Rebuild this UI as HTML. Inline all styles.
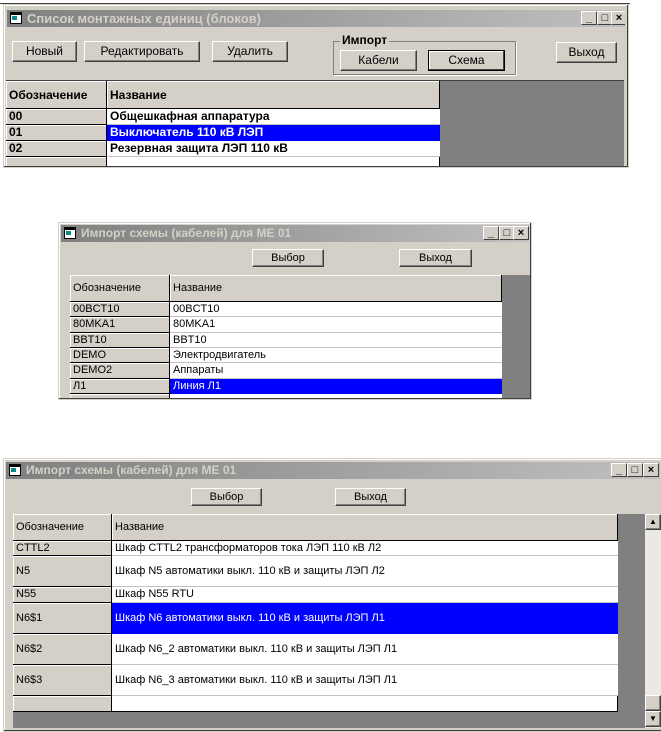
<!DOCTYPE html>
<html><head><meta charset="utf-8"><style>
*{box-sizing:border-box;margin:0;padding:0}
body{width:661px;height:730px;background:#fff;position:relative;overflow:hidden;font-family:"Liberation Sans","DejaVu Sans",sans-serif;font-size:12px;color:#000}
.a{position:absolute}
.win{position:absolute;background:#d4d0c8;border:1px solid #d4d0c8;box-shadow:inset -1px -1px #404040,inset 1px 1px #fff}
.title{position:absolute;height:17px;background:linear-gradient(90deg,#808080,#c0c0c0);color:#d4d0c8;font-weight:bold;font-size:12px;line-height:17px;padding-left:20px;white-space:nowrap;overflow:hidden}
.ico{position:absolute;left:3px;top:2px;width:12px;height:12px;background:#fff;border:1px solid #000;border-top:3px solid #000}
.ico:after{content:"";position:absolute;left:1px;top:1px;width:5px;height:4px;background:#0a8a8a}
.tb{position:absolute;top:1px;width:16px;height:14px;background:#d4d0c8;border:1px solid;border-color:#fff #404040 #404040 #fff;font-size:11px;line-height:12px;text-align:center;color:#000;font-weight:bold}
.btn{position:absolute;background:#d4d0c8;border:1px solid;border-color:#fff #404040 #404040 #fff;box-shadow:inset -1px -1px #808080;text-align:center;font-size:12px}
.grid{position:absolute;background:#808080;overflow:hidden}
.c{position:absolute;white-space:nowrap;overflow:hidden;padding-left:3px}
.hd{background:#d4d0c8;border-right:1px solid #000;border-bottom:1px solid #000;box-shadow:inset 1px 1px #fff}
.w{background:#fff;border-bottom:1px solid #c0c0c0}
.sel{background:#0000ff;color:#fff}
</style></head><body>

<!-- Window 1 -->
<div class="a" style="left:0;top:3px;width:630px;height:1px;background:#404040"></div>
<div class="win" style="left:3px;top:4px;width:626px;height:164px">
  <div class="title" style="left:3px;top:5px;width:618px;font-size:13px">Список монтажных единиц (блоков)<div class="ico"></div>
    <div class="tb" style="left:574px">_</div><div class="tb" style="left:590px">□</div><div class="tb" style="left:604px">×</div>
  </div>
</div>
<div class="btn" style="left:12px;top:41px;width:65px;height:21px;line-height:19px">Новый</div>
<div class="btn" style="left:84px;top:41px;width:116px;height:21px;line-height:19px">Редактировать</div>
<div class="btn" style="left:212px;top:41px;width:76px;height:21px;line-height:19px">Удалить</div>
<div class="a" style="left:333px;top:41px;width:183px;height:34px;border:1px solid #808080;box-shadow:1px 1px #fff"></div>
<div class="a" style="left:340px;top:33px;background:#d4d0c8;font-weight:bold;font-size:12px;padding:0 2px">Импорт</div>
<div class="btn" style="left:340px;top:50px;width:77px;height:21px;line-height:19px">Кабели</div>
<div class="btn" style="left:428px;top:50px;width:77px;height:21px;line-height:19px;border:1px solid #000;box-shadow:inset -1px -1px #404040,inset 1px 1px #fff">Схема</div>
<div class="btn" style="left:556px;top:42px;width:61px;height:21px;line-height:19px">Выход</div>
<div class="grid" style="left:6px;top:80px;width:618px;height:86px;border-top:1px solid #404040">
  <div class="c hd" style="left:0;top:0;width:101px;height:28px;line-height:28px;font-weight:bold">Обозначение</div>
  <div class="c hd" style="left:101px;top:0;width:333px;height:28px;line-height:28px;font-weight:bold">Название</div>
  <div class="c hd" style="left:0;top:28px;width:101px;height:16px;line-height:15px;font-weight:bold">00</div>
  <div class="c w" style="left:101px;top:28px;width:333px;height:16px;line-height:15px;font-weight:bold">Общешкафная аппаратура</div>
  <div class="c hd" style="left:0;top:44px;width:101px;height:16px;line-height:15px;font-weight:bold">01</div>
  <div class="c sel" style="left:101px;top:44px;width:333px;height:16px;line-height:15px;font-weight:bold">Выключатель 110 кВ ЛЭП</div>
  <div class="c hd" style="left:0;top:60px;width:101px;height:16px;line-height:15px;font-weight:bold">02</div>
  <div class="c w" style="left:101px;top:60px;width:333px;height:16px;line-height:15px;font-weight:bold">Резервная защита ЛЭП 110 кВ</div>
  <div class="c hd" style="left:0;top:76px;width:101px;height:12px"></div>
  <div class="c w" style="left:101px;top:76px;width:333px;height:12px;border-right:1px solid #000"></div>
</div>

<!-- Window 2 -->
<div class="win" style="left:58px;top:222px;width:474px;height:178px">
  <div class="title" style="left:2px;top:2px;width:468px">Импорт схемы (кабелей) для МЕ 01<div class="ico"></div>
    <div class="tb" style="left:422px">_</div><div class="tb" style="left:438px">□</div><div class="tb" style="left:452px">×</div>
  </div>
</div>
<div class="btn" style="left:252px;top:249px;width:72px;height:18px;line-height:16px;font-size:11px">Выбор</div>
<div class="btn" style="left:399px;top:249px;width:73px;height:18px;line-height:16px;font-size:11px">Выход</div>
<div class="grid" style="left:70px;top:275px;width:460px;height:123px;font-size:11px">
  <div class="c hd" style="left:0;top:0;width:100px;height:27px;line-height:27px">Обозначение</div>
  <div class="c hd" style="left:100px;top:0;width:332px;height:27px;line-height:27px">Название</div>
  <div class="c hd" style="left:0;top:27px;width:100px;height:15px;line-height:14px">00BCT10</div>
  <div class="c w" style="left:100px;top:27px;width:332px;height:15px;line-height:14px">00BCT10</div>
  <div class="c hd" style="left:0;top:42px;width:100px;height:16px;line-height:15px">80MKA1</div>
  <div class="c w" style="left:100px;top:42px;width:332px;height:16px;line-height:15px">80MKA1</div>
  <div class="c hd" style="left:0;top:58px;width:100px;height:15px;line-height:14px">BBT10</div>
  <div class="c w" style="left:100px;top:58px;width:332px;height:15px;line-height:14px">BBT10</div>
  <div class="c hd" style="left:0;top:73px;width:100px;height:15px;line-height:14px">DEMO</div>
  <div class="c w" style="left:100px;top:73px;width:332px;height:15px;line-height:14px">Электродвигатель</div>
  <div class="c hd" style="left:0;top:88px;width:100px;height:16px;line-height:15px">DEMO2</div>
  <div class="c w" style="left:100px;top:88px;width:332px;height:16px;line-height:15px">Аппараты</div>
  <div class="c hd" style="left:0;top:104px;width:100px;height:15px;line-height:14px">Л1</div>
  <div class="c sel" style="left:100px;top:104px;width:332px;height:15px;line-height:14px">Линия Л1</div>
  <div class="c hd" style="left:0;top:119px;width:100px;height:6px"></div>
  <div class="c w" style="left:100px;top:119px;width:332px;height:6px"></div>
</div>

<!-- Window 3 -->
<div class="win" style="left:3px;top:458px;width:660px;height:274px">
  <div class="title" style="left:2px;top:3px;width:654px">Импорт схемы (кабелей) для МЕ 01<div class="ico"></div>
    <div class="tb" style="left:605px">_</div><div class="tb" style="left:621px">□</div><div class="tb" style="left:637px">×</div>
  </div>
</div>
<div class="btn" style="left:191px;top:488px;width:71px;height:18px;line-height:16px;font-size:11px">Выбор</div>
<div class="btn" style="left:335px;top:488px;width:71px;height:18px;line-height:16px;font-size:11px">Выход</div>
<div class="grid" style="left:13px;top:514px;width:632px;height:214px;font-size:11px">
  <div class="c hd" style="left:0;top:0;width:99px;height:27px;line-height:27px">Обозначение</div>
  <div class="c hd" style="left:99px;top:0;width:506px;height:27px;line-height:27px">Название</div>
  <div class="c hd" style="left:0;top:27px;width:99px;height:15px;line-height:14px">CTTL2</div>
  <div class="c w" style="left:99px;top:27px;width:506px;height:15px;line-height:14px">Шкаф CTTL2 трансформаторов тока ЛЭП 110 кВ Л2</div>
  <div class="c hd" style="left:0;top:42px;width:99px;height:31px;line-height:30px">N5</div>
  <div class="c w" style="left:99px;top:42px;width:506px;height:31px;line-height:30px">Шкаф N5 автоматики выкл. 110 кВ и защиты ЛЭП Л2</div>
  <div class="c hd" style="left:0;top:73px;width:99px;height:16px;line-height:15px">N55</div>
  <div class="c w" style="left:99px;top:73px;width:506px;height:16px;line-height:15px">Шкаф N55 RTU</div>
  <div class="c hd" style="left:0;top:89px;width:99px;height:31px;line-height:30px">N6$1</div>
  <div class="c sel" style="left:99px;top:89px;width:506px;height:31px;line-height:30px">Шкаф N6 автоматики выкл. 110 кВ и защиты ЛЭП Л1</div>
  <div class="c hd" style="left:0;top:120px;width:99px;height:31px;line-height:30px">N6$2</div>
  <div class="c w" style="left:99px;top:120px;width:506px;height:31px;line-height:30px">Шкаф N6_2 автоматики выкл. 110 кВ и защиты ЛЭП Л1</div>
  <div class="c hd" style="left:0;top:151px;width:99px;height:31px;line-height:30px">N6$3</div>
  <div class="c w" style="left:99px;top:151px;width:506px;height:31px;line-height:30px">Шкаф N6_3 автоматики выкл. 110 кВ и защиты ЛЭП Л1</div>
  <div class="c hd" style="left:0;top:182px;width:99px;height:16px"></div>
  <div class="c w" style="left:99px;top:182px;width:506px;height:16px;border-bottom:1px solid #000;border-right:1px solid #000"></div>
</div>
<div class="a" style="left:645px;top:514px;width:16px;height:214px;background:#ece9e4"></div>
<div class="btn" style="left:645px;top:514px;width:16px;height:16px;font-size:8px;line-height:14px">▲</div>
<div class="btn" style="left:645px;top:695px;width:16px;height:16px"></div>
<div class="btn" style="left:645px;top:711px;width:16px;height:16px;font-size:8px;line-height:14px">▼</div>
</body></html>
